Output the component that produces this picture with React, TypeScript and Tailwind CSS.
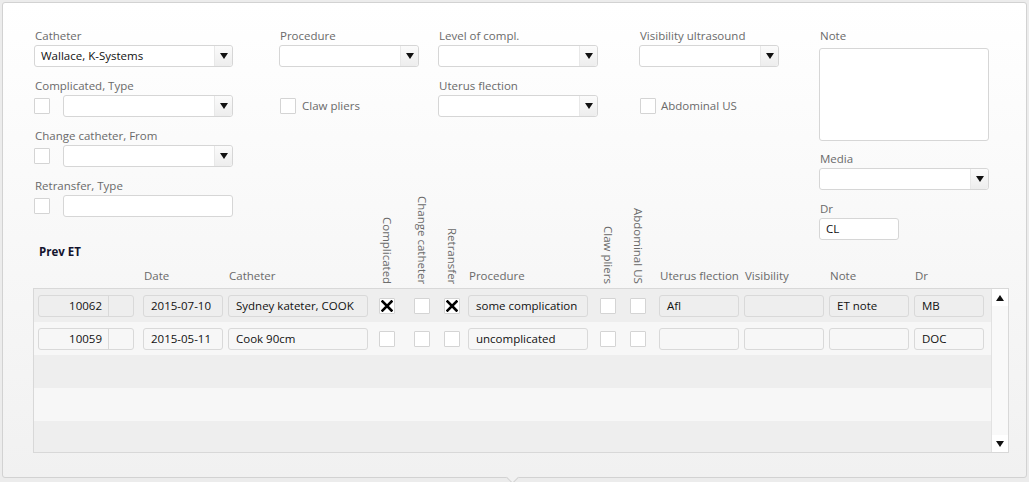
import React from 'react';

const Arrow = ({ up = false }: { up?: boolean }) => (
  <svg width="8" height="6" viewBox="0 0 8 6" className="block">
    {up ? <polygon points="0,6 8,6 4,0" fill="#111" /> : <polygon points="0,0 8,0 4,6" fill="#111" />}
  </svg>
);

const Cross = () => (
  <svg width="12" height="12" viewBox="0 0 12 12" className="block">
    <path d="M1.5 1.5 L10.5 10.5 M10.5 1.5 L1.5 10.5" stroke="#000" strokeWidth="2.6" strokeLinecap="square" />
  </svg>
);

const Label = ({ children, className = '' }: { children?: React.ReactNode; className?: string }) => (
  <div className={`h-4 leading-4 pl-px text-[#6a6a6a] whitespace-nowrap ${className}`}>{children}</div>
);

const Select = ({ value = '', className = '' }: { value?: string; className?: string }) => (
  <div className={`flex h-[22px] rounded-[3px] border border-[#d6d6d6] bg-white ${className}`}>
    <div className="flex-1 truncate pl-[6px] leading-[20px] text-[#111]">{value}</div>
    <div className="flex w-[18px] items-center justify-center rounded-r-[3px] border-l border-[#e8e8e8] bg-gradient-to-b from-[#fbfbfb] to-[#ededed]">
      <Arrow />
    </div>
  </div>
);

const Input = ({ value = '', className = '' }: { value?: string; className?: string }) => (
  <div className={`h-[22px] rounded-[3px] border border-[#d6d6d6] bg-white pl-[6px] leading-[20px] text-[#111] ${className}`}>
    {value}
  </div>
);

const Check = ({ checked = false, className = '' }: { checked?: boolean; className?: string }) => (
  <div className={`flex h-4 w-4 shrink-0 items-center justify-center rounded-[1px] border border-[#d4d4d4] bg-white ${className}`}>
    {checked && <Cross />}
  </div>
);

const Cell = ({ value = '', className = '' }: { value?: string; className?: string }) => (
  <div className={`h-[22px] shrink-0 truncate rounded-[3px] border border-[#d9d9d9] px-[7px] leading-[20px] text-[#111] ${className}`}>
    {value}
  </div>
);

type Row = {
  id: string;
  date: string;
  catheter: string;
  compl: boolean;
  change: boolean;
  retransfer: boolean;
  procedure: string;
  claw: boolean;
  abd: boolean;
  uterus: string;
  visibility: string;
  note: string;
  dr: string;
};

const rows: Row[] = [
  { id: '10062', date: '2015-07-10', catheter: 'Sydney kateter, COOK', compl: true, change: false, retransfer: true, procedure: 'some complication', claw: false, abd: false, uterus: 'Afl', visibility: '', note: 'ET note', dr: 'MB' },
  { id: '10059', date: '2015-05-11', catheter: 'Cook 90cm', compl: false, change: false, retransfer: false, procedure: 'uncomplicated', claw: false, abd: false, uterus: '', visibility: '', note: '', dr: 'DOC' },
];

const Vert = ({ children, className = '' }: { children: React.ReactNode; className?: string }) => (
  <div className={`flex w-4 shrink-0 justify-center ${className}`}>
    <span className="whitespace-nowrap leading-4 text-[#6a6a6a] [writing-mode:vertical-rl]">{children}</span>
  </div>
);

const HeadText = ({ children, className = '' }: { children?: React.ReactNode; className?: string }) => (
  <div className={`shrink-0 pl-px leading-4 text-[#6a6a6a] whitespace-nowrap ${className}`}>{children}</div>
);

export default function App() {
  return (
    <div className="relative h-[482px] w-[1029px] overflow-hidden bg-[#ececec] font-['Open_Sans','Liberation_Sans',sans-serif] text-[11.5px]">
      <div className="relative mx-[2px] mt-[2px] h-[476px] rounded-[3px] border border-[#d2d2d2] bg-gradient-to-b from-white to-[#f1f1f1] pl-[31px] pt-[25px]">
        {/* form */}
        <div className="flex">
          <div className="w-[199px] shrink-0">
            <Label>Catheter</Label>
            <Select value="Wallace, K-Systems" className="mt-px" />
            <Label className="mt-[11px]">Complicated, Type</Label>
            <div className="mt-px flex h-[22px] items-center">
              <Check />
              <Select className="ml-[13px] flex-1" />
            </div>
            <Label className="mt-[11px]">Change catheter, From</Label>
            <div className="mt-px flex h-[22px] items-center">
              <Check />
              <Select className="ml-[13px] flex-1" />
            </div>
            <Label className="mt-[11px]">Retransfer, Type</Label>
            <div className="mt-px flex h-[22px] items-center">
              <Check />
              <Input className="ml-[13px] flex-1" />
            </div>
          </div>

          <div className="ml-[46px] w-[140px] shrink-0">
            <Label>Procedure</Label>
            <Select className="mt-px" />
            <Label className="mt-[11px]" />
            <div className="mt-px flex h-[22px] items-center">
              <Check className="ml-px" />
              <span className="ml-[6px] text-[#6a6a6a]">Claw pliers</span>
            </div>
          </div>

          <div className="ml-[19px] w-[160px] shrink-0">
            <Label>Level of compl.</Label>
            <Select className="mt-px" />
            <Label className="mt-[11px]">Uterus flection</Label>
            <Select className="mt-px" />
          </div>

          <div className="ml-[41px] w-[140px] shrink-0">
            <Label>Visibility ultrasound</Label>
            <Select className="mt-px" />
            <Label className="mt-[11px]" />
            <div className="mt-px flex h-[22px] items-center">
              <Check className="ml-px" />
              <span className="ml-[5px] text-[#6a6a6a]">Abdominal US</span>
            </div>
          </div>

          <div className="ml-[40px] w-[170px] shrink-0">
            <Label>Note</Label>
            <div className="mt-[4px] h-[93px] rounded-[3px] border border-[#d6d6d6] bg-white" />
            <Label className="mt-[10px]">Media</Label>
            <Select className="mt-px" />
            <Label className="mt-[11px]">Dr</Label>
            <Input value="CL" className="mt-px w-[80px]" />
          </div>
        </div>

        {/* previous ET list */}
        <div className="mt-[4px] ml-[5px] font-bold leading-4 text-[#14142e]">Prev ET</div>

        <div className="mt-[8px] flex h-4 items-end pl-[4px]">
          <HeadText className="w-[96px]" />
          <HeadText className="ml-[9px] w-[80px]">Date</HeadText>
          <HeadText className="ml-[5px] w-[140px]">Catheter</HeadText>
          <Vert className="ml-[11px]">Complicated</Vert>
          <Vert className="ml-[19px]">Change catheter</Vert>
          <Vert className="ml-[14px]">Retransfer</Vert>
          <HeadText className="ml-[8px] w-[120px]">Procedure</HeadText>
          <Vert className="ml-[12px]">Claw pliers</Vert>
          <Vert className="ml-[14px]">Abdominal US</Vert>
          <HeadText className="ml-[13px] w-[80px]">Uterus flection</HeadText>
          <HeadText className="ml-[5px] w-[80px]">Visibility</HeadText>
          <HeadText className="ml-[5px] w-[80px]">Note</HeadText>
          <HeadText className="ml-[5px] w-[70px]">Dr</HeadText>
        </div>

        <div className="mt-[4px] -ml-px flex h-[165px] w-[976px] border border-[#d8d8d8]">
          <div className="flex-1 overflow-hidden">
            {[0, 1, 2, 3, 4].map((i) => {
              const r = rows[i];
              return (
                <div key={i} className={`flex h-[33px] items-center pl-[4px] ${i % 2 === 0 ? 'bg-[#eeeeee]' : 'bg-[#f7f7f7]'}`}>
                  {r && (
                    <>
                      <div className="flex h-[22px] w-[96px] shrink-0 rounded-[3px] border border-[#d9d9d9] leading-[20px] text-[#111]">
                        <div className="w-[70px] border-r border-[#d9d9d9] pr-[6px] text-right">{r.id}</div>
                      </div>
                      <Cell value={r.date} className="ml-[9px] w-[80px]" />
                      <Cell value={r.catheter} className="ml-[5px] w-[140px]" />
                      <Check checked={r.compl} className="ml-[11px]" />
                      <Check checked={r.change} className="ml-[19px]" />
                      <Check checked={r.retransfer} className="ml-[14px]" />
                      <Cell value={r.procedure} className="ml-[8px] w-[120px]" />
                      <Check checked={r.claw} className="ml-[12px]" />
                      <Check checked={r.abd} className="ml-[14px]" />
                      <Cell value={r.uterus} className="ml-[13px] w-[80px]" />
                      <Cell value={r.visibility} className="ml-[5px] w-[80px]" />
                      <Cell value={r.note} className="ml-[5px] w-[80px]" />
                      <Cell value={r.dr} className="ml-[5px] w-[70px]" />
                    </>
                  )}
                </div>
              );
            })}
          </div>
          <div className="flex w-[17px] shrink-0 flex-col justify-between border-l border-[#e2e2e2] bg-[#f9f9f9]">
            <div className="flex h-[17px] items-center justify-center bg-white">
              <Arrow up />
            </div>
            <div className="flex h-[17px] items-center justify-center bg-white">
              <Arrow />
            </div>
          </div>
        </div>

        <div className="absolute -bottom-[5px] left-[505px] h-[9px] w-[9px] rotate-45 border-b border-r border-[#d2d2d2] bg-[#f1f1f1]" />
      </div>
    </div>
  );
}
